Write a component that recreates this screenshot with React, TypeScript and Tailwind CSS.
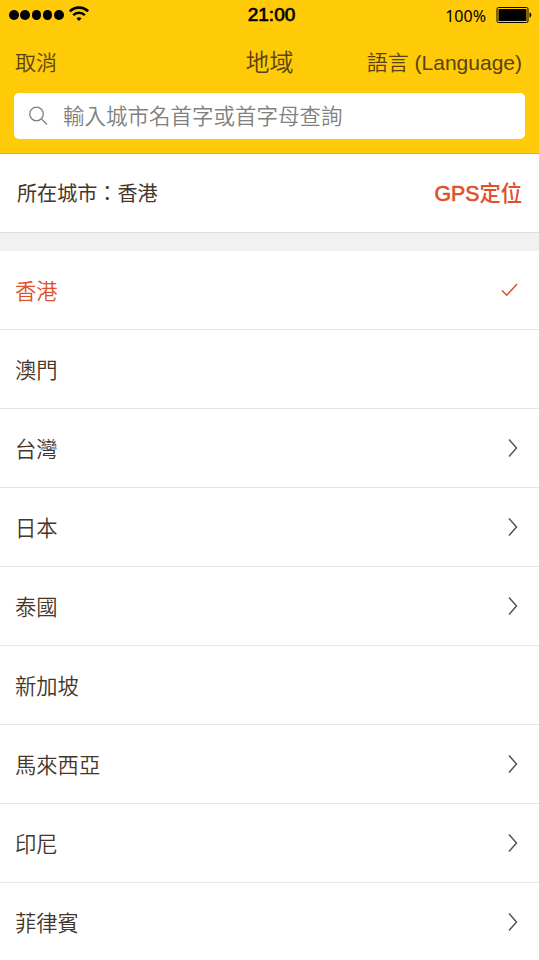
type Region = {
  name: string;
  selected?: boolean;
  hasChildren?: boolean;
};

const regions: Region[] = [
  { name: "香港", selected: true },
  { name: "澳門" },
  { name: "台灣", hasChildren: true },
  { name: "日本", hasChildren: true },
  { name: "泰國", hasChildren: true },
  { name: "新加坡" },
  { name: "馬來西亞", hasChildren: true },
  { name: "印尼", hasChildren: true },
  { name: "菲律賓", hasChildren: true },
];

function WifiIcon() {
  return (
    <svg width="20" height="16" viewBox="0 0 20 16" fill="none" stroke="#000" strokeWidth="2.6">
      <path d="M0.9 5.3a13 13 0 0 1 18.2 0" />
      <path d="M4.2 9.1a8.3 8.3 0 0 1 11.6 0" />
      <path d="M10 15L7.5 12.5a3.7 3.7 0 0 1 5 0z" fill="#000" stroke="none" />
    </svg>
  );
}

function StatusBar() {
  return (
    <div className="grid h-[30px] grid-cols-3 items-center pl-[9px] pr-[7px] text-black">
      <div className="flex items-center gap-[1.8px]">
        {[0, 1, 2, 3, 4].map((dot) => (
          <span key={dot} className="size-[9.5px] rounded-full bg-black" />
        ))}
        <span className="ml-[3.5px] -mt-[3px]">
          <WifiIcon />
        </span>
      </div>
      <div className="pl-[2px] pt-px text-center text-[19px] [-webkit-text-stroke:0.7px_#000]">21:00</div>
      <div className="flex items-center justify-end gap-[10px]">
        <span className="pt-px font-['Noto_Sans',sans-serif] text-[16px]">100%</span>
        <svg width="36" height="16" viewBox="0 0 36 16">
          <rect x="1" y="0.5" width="31" height="15" rx="1.5" fill="none" stroke="#000" />
          <rect x="2.5" y="2" width="28" height="12" rx="0.5" fill="#000" />
          <path d="M33.5 5.5c2.4 0.6 2.4 4.4 0 5z" fill="#000" />
        </svg>
      </div>
    </div>
  );
}

function Header() {
  return (
    <header className="h-[154px] border-b border-[#d0b040] bg-[#ffcb08]">
      <StatusBar />
      <div className="flex h-[63px] items-center justify-between pl-[15px] pr-[17px] pt-[2px] font-[350] text-[#5a4214]">
        <button className="w-[155px] pt-px text-left text-[21px]">取消</button>
        <h1 className="pl-[2px] text-[24px] font-[350]">地域</h1>
        <button className="flex w-[155px] justify-end pt-px text-[21px] whitespace-nowrap">語言 (Language)</button>
      </div>
      <div className="mx-[14px] flex h-[46px] items-center rounded-[5px] bg-white pl-[14px]">
        <svg width="21" height="21" viewBox="0 0 21 21" fill="none" stroke="#808080" strokeWidth="1.3">
          <circle cx="8.5" cy="8" r="6.8" />
          <path d="M13.5 13l5.5 5.5" />
        </svg>
        <span className="ml-[14px] pt-[2px] text-[21.5px] font-[350] text-[#808080]">輸入城市名首字或首字母查詢</span>
      </div>
    </header>
  );
}

function RegionRow({ region }: { region: Region }) {
  return (
    <li
      className={`flex h-[79px] items-center justify-between border-b border-[#e5e5e5] pl-[15px] pr-[21px] text-[21.3px] font-[350] ${
        region.selected ? "text-[#e0502a]" : "text-[#463528]"
      }`}
    >
      <span className="pt-[5px]">{region.name}</span>
      {region.selected && (
        <svg width="17" height="14" viewBox="0 0 17 14" fill="none" stroke="#d8502e" strokeWidth="1.5">
          <path d="M1 7.5l4.7 4.7L16 1" />
        </svg>
      )}
      {region.hasChildren && (
        <svg width="11" height="20" viewBox="0 0 11 20" fill="none" stroke="#555" strokeWidth="1.5">
          <path d="M2 1.5l7.5 8.5L2 18.5" />
        </svg>
      )}
    </li>
  );
}

export default function App() {
  return (
    <div className="h-[960px] w-full overflow-hidden bg-white font-['Liberation_Sans','Noto_Sans_CJK_TC',sans-serif] text-[#463528]">
      <Header />
      <section className="flex h-[78px] items-center justify-between pl-[18px] pr-[17px] pt-[2px] text-[20.1px]">
        <span className="-ml-px pt-px">所在城市：香港</span>
        <button className="pt-[2px] text-[21.3px] text-[#e0502a]">
          <span className="[-webkit-text-stroke:0.6px_#e0502a]">GPS</span>
          <span className="font-medium">定位</span>
        </button>
      </section>
      <div className="h-[19px] border-t border-[#dcdcdc] bg-[#f1f1f1]" />
      <ul>
        {regions.map((region) => (
          <RegionRow key={region.name} region={region} />
        ))}
      </ul>
    </div>
  );
}
